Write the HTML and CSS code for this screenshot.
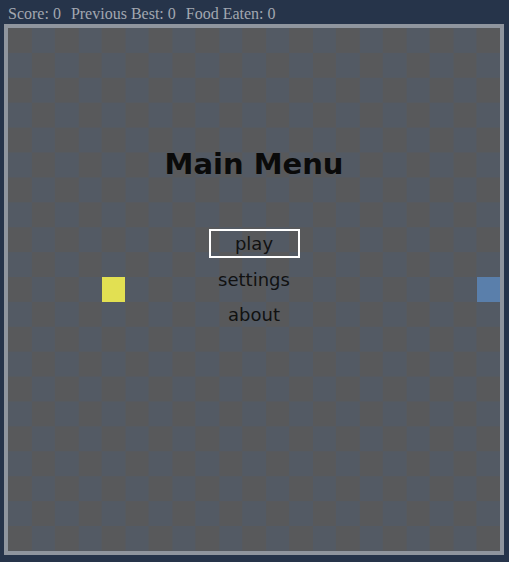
FILE: index.html
```html
<!DOCTYPE html>
<html lang="en">
<head>
<meta charset="utf-8">
<title>Snake</title>
<link rel="stylesheet" href="styles.css">
</head>
<body>
<div class="stats">
  <span>Score: 0</span>
  <span>Previous Best: 0</span>
  <span>Food Eaten: 0</span>
</div>
<div class="board">
  <div class="food"></div>
  <div class="snake"></div>
  <div class="menu">
    <h1 class="title">Main Menu</h1>
    <div class="item selected">play</div>
    <div class="item">settings</div>
    <div class="item">about</div>
  </div>
</div>
</body>
</html>
```
FILE: styles.css
```css
html, body {
  margin: 0;
  padding: 0;
  background: #26344a;
}
body {
  width: 509px;
  height: 562px;
  overflow: hidden;
}
.stats {
  display: flex;
  gap: 10px;
  height: 24px;
  box-sizing: border-box;
  padding: 5px 0 0 8px;
  font-family: "Liberation Serif", "Times New Roman", serif;
  font-size: 16px;
  line-height: 17px;
  color: #a2a7b0;
}
.board {
  margin-left: 4px;
  width: 500px;
  height: 531px;
  box-sizing: border-box;
  border: 4px solid #8f959e;
  display: grid;
  grid-template-columns: repeat(21, 1fr);
  grid-template-rows: repeat(21, 1fr);
  background-color: #58595b;
  background-image: conic-gradient(#535a64 0 25%, #58595b 0 50%, #535a64 0 75%, #58595b 0);
  background-size: calc(492px / 21 * 2) calc(523px / 21 * 2);
}
.food {
  grid-column: 5;
  grid-row: 11;
  background: #e2e052;
}
.snake {
  grid-column: 21;
  grid-row: 11;
  background: #5a7fab;
}
.menu {
  grid-column: 1 / -1;
  grid-row: 1 / -1;
  display: flex;
  flex-direction: column;
  align-items: center;
  padding-top: 119px;
  font-family: "DejaVu Sans", Verdana, sans-serif;
  color: #111;
}
.title {
  margin: 0 0 48px;
  font-size: 29px;
  line-height: 34px;
  font-weight: bold;
  color: #0a0a0a;
}
.item {
  width: 91px;
  height: 29px;
  box-sizing: border-box;
  border: 2px solid transparent;
  padding: 2px 0;
  font-size: 18px;
  line-height: 21px;
  text-align: center;
  margin-bottom: 6.5px;
}
.item.selected {
  border-color: #ffffff;
}
```
